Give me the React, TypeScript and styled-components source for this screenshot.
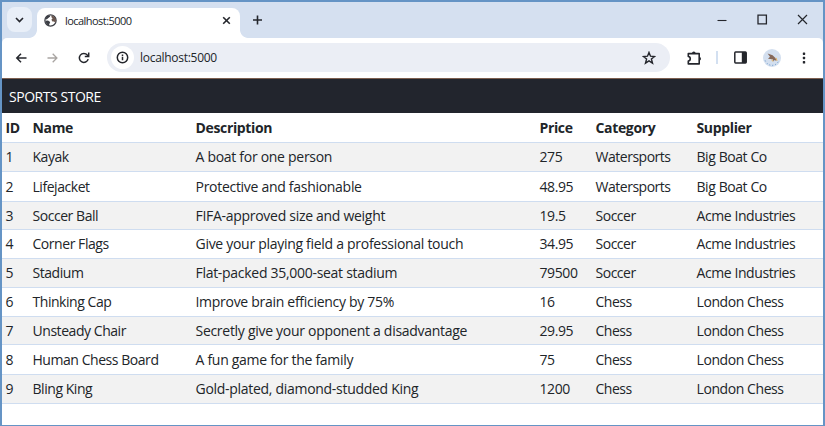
import React from "react";
import styled, { createGlobalStyle } from "styled-components";

const GlobalStyle = createGlobalStyle`
  * { box-sizing: border-box; }
  body { margin: 0; background: #fff; overflow: hidden; }
`;

const ui = `"Open Sans", "Noto Sans", sans-serif`;

const Window = styled.div`
  width: 825px;
  height: 426px;
  display: flex;
  flex-direction: column;
  background: #fff;
  border: solid #6594c5;
  border-width: 2px 2px 1px 2px;
  font-family: ${ui};
  color: #212529;
  overflow: hidden;
`;

const TabStrip = styled.div`
  flex: none;
  height: 36px;
  display: flex;
  background: #d5e0f0;
`;

const TabSearch = styled.div`
  width: 25px;
  height: 25px;
  margin: 5px 5px 0 5px;
  border-radius: 8px;
  background: #e9eff8;
  display: flex;
  align-items: center;
  justify-content: center;
`;

const Tab = styled.div`
  position: relative;
  width: 203px;
  height: 30px;
  margin-top: 6px;
  padding: 0 9px 5px 7px;
  border-radius: 8px 8px 0 0;
  background: #fff;
  display: flex;
  align-items: center;
  &::before,
  &::after {
    content: "";
    position: absolute;
    bottom: 0;
    width: 8px;
    height: 8px;
  }
  &::before {
    left: -8px;
    background: radial-gradient(circle at 0 0, transparent 7.5px, #fff 8.2px);
  }
  &::after {
    right: -8px;
    background: radial-gradient(circle at 100% 0, transparent 7.5px, #fff 8.2px);
  }
`;

const TabTitle = styled.span`
  flex: 1;
  margin-left: 8px;
  font-size: 11px;
  line-height: 16px;
  letter-spacing: -0.55px;
  white-space: nowrap;
`;

const NewTab = styled.div`
  margin-left: 12px;
  height: 36px;
  display: flex;
  align-items: center;
`;

const Controls = styled.div`
  margin-left: auto;
  margin-right: 15px;
  height: 35px;
  display: flex;
  align-items: center;
  gap: 29px;
`;

const Toolbar = styled.div`
  flex: none;
  height: 40px;
  background: #d5e0f0;
`;

const ToolbarInner = styled.div`
  height: 40px;
  display: flex;
  align-items: center;
  padding: 0 12px 1px 12px;
  border-radius: 5px 5px 0 0;
  background: #fff;
`;

const NavButtons = styled.div`
  display: flex;
  gap: 18px;
  width: 93px;
`;

const AddressBar = styled.div`
  width: 563px;
  height: 29px;
  padding: 0 14px 0 4px;
  border-radius: 15px;
  background: #ebeef5;
  display: flex;
  align-items: center;
`;

const SiteInfo = styled.div`
  width: 23px;
  height: 23px;
  border-radius: 50%;
  background: #fff;
  display: flex;
  align-items: center;
  justify-content: center;
`;

const Url = styled.span`
  flex: 1;
  margin-left: 6px;
  font-size: 12px;
  line-height: 18px;
  letter-spacing: -0.28px;
`;

const Divider = styled.div`
  width: 2px;
  height: 13px;
  margin: 0 16px 0 14px;
  background: #d3e0f1;
`;

const Extension = styled.div`
  display: flex;
  margin-left: 17px;
`;

const Avatar = styled.div`
  display: flex;
  margin: 0 21px 0 16px;
`;

const Banner = styled.div`
  flex: none;
  height: 35px;
  padding: 2px 7px 0;
  border-top: 1px solid #7d5f50;
  background: #22252d;
  color: #fff;
  font-size: 14px;
  line-height: 32px;
  letter-spacing: -0.46px;
`;

const Table = styled.table`
  width: 821px;
  table-layout: fixed;
  border-collapse: separate;
  border-spacing: 0;
  font-size: 14px;
`;

const Head = styled.th`
  height: 30px;
  padding: 0 0 0 3.5px;
  border-bottom: 1px solid #cfddf0;
  text-align: left;
  font-weight: 700;
  line-height: 20px;
  letter-spacing: -0.35px;
  white-space: nowrap;
`;

const Row = styled.tr<{ $height: number; $striped: boolean }>`
  height: ${(p) => p.$height}px;
  background: ${(p) => (p.$striped ? "#f2f2f2" : "#fff")};
`;

const Cell = styled.td<{ $tracking: number }>`
  padding: 0 0 0 3.5px;
  border-bottom: 1px solid #cfddf0;
  line-height: 20px;
  letter-spacing: ${(p) => p.$tracking}px;
  white-space: nowrap;
`;

const columns = [
  { label: "ID", width: 27, tracking: -0.2 },
  { label: "Name", width: 163, tracking: -0.45 },
  { label: "Description", width: 344, tracking: -0.29 },
  { label: "Price", width: 56, tracking: -0.4 },
  { label: "Category", width: 101, tracking: -0.48 },
  { label: "Supplier", width: 130, tracking: -0.42 },
];

const products = [
  { h: 29, cells: ["1", "Kayak", "A boat for one person", "275", "Watersports", "Big Boat Co"] },
  { h: 30, cells: ["2", "Lifejacket", "Protective and fashionable", "48.95", "Watersports", "Big Boat Co"] },
  { h: 28, cells: ["3", "Soccer Ball", "FIFA-approved size and weight", "19.5", "Soccer", "Acme Industries"] },
  { h: 29, cells: ["4", "Corner Flags", "Give your playing field a professional touch", "34.95", "Soccer", "Acme Industries"] },
  { h: 29, cells: ["5", "Stadium", "Flat-packed 35,000-seat stadium", "79500", "Soccer", "Acme Industries"] },
  { h: 29, cells: ["6", "Thinking Cap", "Improve brain efficiency by 75%", "16", "Chess", "London Chess"] },
  { h: 28, cells: ["7", "Unsteady Chair", "Secretly give your opponent a disadvantage", "29.95", "Chess", "London Chess"] },
  { h: 30, cells: ["8", "Human Chess Board", "A fun game for the family", "75", "Chess", "London Chess"] },
  { h: 29, cells: ["9", "Bling King", "Gold-plated, diamond-studded King", "1200", "Chess", "London Chess"] },
];

const ink = "#24262c";

const Glyph = ({ w, h, d, color = ink, sw = 1.6 }: { w: number; h: number; d: string; color?: string; sw?: number }) => (
  <svg width={w} height={h} viewBox={`0 0 ${w} ${h}`} fill="none" stroke={color} strokeWidth={sw}>
    <path d={d} />
  </svg>
);

const Globe = () => (
  <svg width="13" height="13" viewBox="0 0 13 13">
    <circle cx="6.5" cy="6.5" r="5.6" fill="#fff" stroke="#3c3e45" strokeWidth="1.3" />
    <path d="M1.4 4.8 3 2 5.6 1.2 6.2 2.4 5 3.6 3.8 4.4 2.6 5.6Z" fill="#3c3e45" />
    <path d="M1.4 6.8 4 6.6 6.2 8 5.6 9.4 4.8 11.8 2.6 10.2Z" fill="#3c3e45" />
    <path d="M7.4 1.3 10.8 3 12 6 11.4 8.8 10 7.6 8.4 7.4 7.4 5.8 8.6 4.2 7.4 3.2Z" fill="#6a564e" />
  </svg>
);

const Info = () => (
  <svg width="13" height="13" viewBox="0 0 13 13">
    <circle cx="6.5" cy="6.5" r="5.2" fill="none" stroke={ink} strokeWidth="1.5" />
    <path d="M6.5 5.8V9.3M6.5 3.5V4.9" stroke={ink} strokeWidth="1.5" />
  </svg>
);

const Reload = () => (
  <svg width="12" height="12" viewBox="0 0 12 12" fill="none" stroke={ink} strokeWidth="1.5">
    <path d="M10.2 7.1A4.5 4.5 0 1 1 9.3 3L10.4 4.2" />
    <path d="M10.7.6V4.5H6.8" />
  </svg>
);

const Puzzle = () => (
  <svg width="15" height="14" viewBox="0 0 15 14" fill="none" stroke={ink} strokeWidth="1.6" strokeLinejoin="round">
    <path d="M1.3 2.6H12.2V12.9H1.3V10C3.9 9.8 3.9 5.7 1.3 5.5Z" />
    <path d="M5 2.2A1.8 1.8 0 0 1 8.6 2.2ZM12.6 6A1.8 1.8 0 0 1 12.6 9.5Z" fill={ink} stroke="none" />
  </svg>
);

const SidePanel = () => (
  <svg width="13" height="13" viewBox="0 0 13 13">
    <rect x=".8" y="1.1" width="11.4" height="10.8" rx=".8" fill="none" stroke={ink} strokeWidth="1.5" />
    <path d="M7.8 1H12.2V12H7.8Z" fill={ink} />
  </svg>
);

const Profile = () => (
  <svg width="18" height="18" viewBox="0 0 18 18">
    <circle cx="9" cy="9" r="9" fill="#d3dfef" />
    <path d="M2.2 11.5A7.2 7.2 0 0 0 15.8 11.5" fill="none" stroke="#6594c5" strokeDasharray="1 2" />
    <path d="M4.6 4.6 9.6 6.2 12.6 9.2 13.4 12 11.6 11 10.6 12.2 9.6 10.2 5 9.8 7 7.8Z" fill="#86695a" />
    <path d="M8.6 10.6 10 12.6M13 8.8 14 11.8" stroke="#e5b15e" />
  </svg>
);

const Menu = () => (
  <svg width="4" height="12" viewBox="0 0 4 12" fill={ink}>
    <rect x=".8" y=".5" width="2.4" height="2.4" rx=".6" />
    <rect x=".8" y="4.8" width="2.4" height="2.4" rx=".6" />
    <rect x=".8" y="9.1" width="2.4" height="2.4" rx=".6" />
  </svg>
);

export default function App() {
  return (
    <Window>
      <GlobalStyle />
      <TabStrip>
        <TabSearch>
          <Glyph w={9} h={6} d="M1 1 4.5 4.5 8 1" />
        </TabSearch>
        <Tab>
          <Globe />
          <TabTitle>localhost:5000</TabTitle>
          <Glyph w={9} h={9} d="M1.2 1.2 7.8 7.8M7.8 1.2 1.2 7.8" />
        </Tab>
        <NewTab>
          <Glyph w={11} h={10} d="M1 5H10M5.5.5V9.5" />
        </NewTab>
        <Controls>
          <Glyph w={10} h={10} d="M.5 5.5H9.5" sw={1.1} />
          <Glyph w={12} h={11} d="M2 1.2H10.4V9.8H2Z" sw={1.3} />
          <Glyph w={11} h={11} d="M1 1 10 10M10 1 1 10" sw={1.2} />
        </Controls>
      </TabStrip>
      <Toolbar>
        <ToolbarInner>
          <NavButtons>
            <Glyph w={14} h={12} d="M12.5 6H3M7 1.8 2.8 6 7 10.2" sw={1.5} />
            <Glyph w={14} h={12} d="M1.5 6H10.7M6.7 1.8 10.9 6 6.7 10.2" color="#a9a5a2" sw={1.3} />
            <Reload />
          </NavButtons>
          <AddressBar>
            <SiteInfo>
              <Info />
            </SiteInfo>
            <Url>localhost:5000</Url>
            <Glyph w={14} h={14} d="M7 1.4 8.5 5.2 12.6 5.5 9.4 8 10.5 12.1 7 9.8 3.5 12.1 4.6 8 1.4 5.5 5.5 5.2Z" sw={1.4} />
          </AddressBar>
          <Extension>
            <Puzzle />
          </Extension>
          <Divider />
          <SidePanel />
          <Avatar>
            <Profile />
          </Avatar>
          <Menu />
        </ToolbarInner>
      </Toolbar>
      <Banner>SPORTS STORE</Banner>
      <Table>
        <colgroup>
          {columns.map((c) => (
            <col key={c.label} width={c.width} />
          ))}
        </colgroup>
        <thead>
          <tr>
            {columns.map((c) => (
              <Head key={c.label}>{c.label}</Head>
            ))}
          </tr>
        </thead>
        <tbody>
          {products.map((p, i) => (
            <Row key={p.cells[0]} $height={p.h} $striped={i % 2 === 0}>
              {p.cells.map((text, j) => (
                <Cell key={columns[j].label} $tracking={columns[j].tracking}>
                  {text}
                </Cell>
              ))}
            </Row>
          ))}
        </tbody>
      </Table>
    </Window>
  );
}
